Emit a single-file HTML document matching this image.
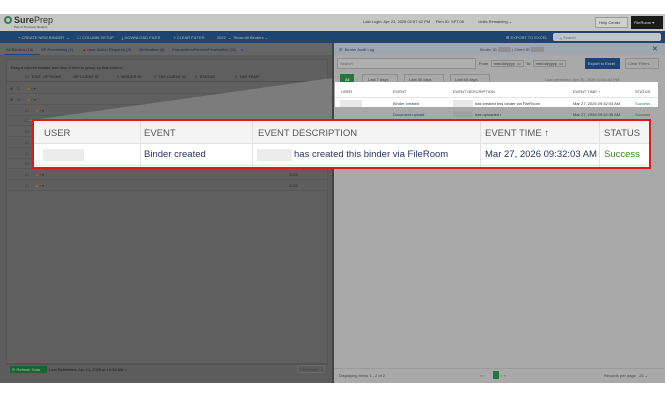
<!DOCTYPE html>
<html><head><meta charset="utf-8"><style>
*{margin:0;padding:0;box-sizing:border-box}
body{width:665px;height:400px;background:#fff;position:relative;overflow:hidden;font-family:"Liberation Sans",sans-serif}
.a{position:absolute}
.t{position:absolute;font-size:4px;color:#333;white-space:nowrap}
.c{font-size:9.5px!important}
</style></head><body>
<div class="a" style="left:0;top:14px;width:665px;height:17px;background:#c6c6c6"></div>
<div class="a" style="left:4px;top:16px;width:8px;height:8px;border-radius:50%;border:2px solid #3b7a4a"></div>
<div class="t" style="left:14px;top:15px;font-size:9px;font-weight:bold;color:#333">Sure<span style="font-weight:normal">Prep</span></div>
<div class="t" style="left:14px;top:25px;font-size:3px">Part of Thomson Reuters</div>
<div class="t" style="left:363px;top:19px">Last Login: Apr 23, 2026 02:57:42 PM &nbsp;&nbsp;&nbsp; Firm ID: SPT.05 &nbsp;&nbsp;&nbsp;&nbsp;&nbsp;&nbsp;&nbsp;&nbsp;&nbsp;&nbsp;&nbsp; Units Remaining ⌄</div>
<div class="a" style="left:595px;top:17px;width:33px;height:11px;border:1px solid #999;background:#d0d0d0"></div>
<div class="t" style="left:599px;top:20px">Help Center</div>
<div class="a" style="left:631px;top:16px;width:32px;height:13px;background:#1a1a1a"></div>
<div class="t" style="left:634px;top:20px;color:#ddd">FileRoom ▾</div>
<div class="a" style="left:0;top:31px;width:665px;height:12px;background:#1f4470"></div>
<div class="t" style="left:18px;top:35px;color:#b0bccc">+ CREATE NEW BINDER &nbsp;⌄ &nbsp;&nbsp;&nbsp;&nbsp;&nbsp; ☐ COLUMN SETUP &nbsp;&nbsp;&nbsp;&nbsp;&nbsp; ⤓ DOWNLOAD FILES &nbsp;&nbsp;&nbsp;&nbsp;&nbsp;&nbsp;&nbsp;&nbsp;&nbsp;&nbsp; ▿ CLEAR FILTER &nbsp;&nbsp;&nbsp;&nbsp;&nbsp;&nbsp;&nbsp;&nbsp;&nbsp; 2022 &nbsp;⌄ &nbsp;Show All Binders ⌄</div>
<div class="t" style="left:506px;top:35px;color:#b0bccc">⊞ EXPORT TO EXCEL</div>
<div class="a" style="left:553px;top:33px;width:108px;height:8px;background:#c0c4ca;border-radius:2px"></div>
<div class="t" style="left:557px;top:35px;color:#667">🔍 Search</div>
<div class="a" style="left:0;top:43px;width:332px;height:340px;background:#5c5c5c"></div>
<div class="a" style="left:0;top:43px;width:332px;height:12px;background:#666"></div>
<div class="a" style="left:4px;top:54px;width:36px;height:1px;background:#1f4470"></div>
<div class="t" style="left:6px;top:47px;color:#1f2840">All Binders (18) &nbsp;&nbsp;&nbsp;&nbsp;&nbsp; SP Processing (1) &nbsp;&nbsp;&nbsp;&nbsp;&nbsp;&nbsp; <span style="color:#8b1a1a">▲</span> User Action Required (8) &nbsp;&nbsp;&nbsp;&nbsp;&nbsp; Verification (8) &nbsp;&nbsp;&nbsp;&nbsp;&nbsp; Preparation/Review/Finalization (11) &nbsp;&nbsp; <span style="color:#1f4470">●</span></div>
<div class="a" style="left:6px;top:59px;width:322px;height:305px;background:#5f5f5f;border:1px solid #555"></div>
<div class="t" style="left:11px;top:65px;color:#1a1a1a">Drag a column header and drop it here to group by that column</div>
<div class="t" style="left:25px;top:74px;color:#1a1a1a">☐ &nbsp; EDIT &nbsp;OPTIONS &nbsp;&nbsp;&nbsp;&nbsp;&nbsp;&nbsp;&nbsp;&nbsp;&nbsp; SP CLIENT ID &nbsp;&nbsp;&nbsp;&nbsp;&nbsp;&nbsp;&nbsp;&nbsp;&nbsp;&nbsp;&nbsp;&nbsp;&nbsp;&nbsp; ≡ &nbsp;BINDER ID &nbsp;&nbsp;&nbsp;&nbsp;&nbsp;&nbsp;&nbsp;&nbsp;&nbsp; ≡ &nbsp;TAX CLIENT ID &nbsp;&nbsp;&nbsp;&nbsp;&nbsp;&nbsp; ≡ &nbsp;STATUS &nbsp;&nbsp;&nbsp;&nbsp;&nbsp;&nbsp;&nbsp;&nbsp;&nbsp;&nbsp;&nbsp;&nbsp;&nbsp;&nbsp;&nbsp;&nbsp; ≡ &nbsp;TAX YEAR</div>
<div class="a" style="left:6px;top:81px;width:322px;height:1px;background:#505050"></div>
<div id="rows"></div>
<div class="a" style="left:0;top:75px;width:333px;height:46px;background:#7c7c7c;clip-path:polygon(332px 3px,332px 46px,25px 46px)"></div>
<div class="a" style="left:6px;top:364px;width:322px;height:1px;background:#525252"></div>
<div class="a" style="left:10px;top:366px;width:37px;height:7px;background:#1a6230"></div>
<div class="t" style="left:12px;top:367px;color:#9c9">⟳ Refresh Data</div>
<div class="t" style="left:49px;top:367px;color:#1a1a1a">Last Refreshed: Apr 24, 2026 at 10:34 AM <span style="color:#1f4470">●</span></div>
<div class="a" style="left:297px;top:365px;width:28px;height:8px;border:1px solid #6a6a6a"></div>
<div class="t" style="left:300px;top:367px;color:#444">‹ Previous</div>
<div class="a" style="left:332px;top:43px;width:2px;height:340px;background:#444"></div>
<div class="a" style="left:334px;top:43px;width:331px;height:340px;background:#a9a9a9"></div>
<div class="a" style="left:334px;top:43px;width:331px;height:12px;background:#a0a6af"></div>
<div class="t" style="left:339px;top:47px;color:#2a3a5a">☰ &nbsp;Binder Audit Log</div>
<div class="t" style="left:480px;top:47px;color:#444">Binder ID <span style="background:#909090;color:#909090">______</span> | Client ID <span style="background:#909090;color:#909090">______</span></div>
<div class="t" style="left:652px;top:45px;font-size:7px;color:#2a3a5a">✕</div>
<div class="a" style="left:337px;top:58px;width:139px;height:11px;border:1px solid #8e8e8e;background:#afafaf"></div>
<div class="t" style="left:340px;top:61px;color:#666">Search</div>
<div class="t" style="left:479px;top:61px;color:#333">From &nbsp;<span style="border:1px solid #8e8e8e;padding:0 2px">mm/dd/yyyy &nbsp;▭</span> &nbsp;To &nbsp;<span style="border:1px solid #8e8e8e;padding:0 2px">mm/dd/yyyy &nbsp;▭</span></div>
<div class="a" style="left:585px;top:58px;width:35px;height:11px;background:#1a4478"></div>
<div class="t" style="left:588px;top:61px;color:#ccd">Export to Excel</div>
<div class="a" style="left:625px;top:58px;width:34px;height:11px;border:1px solid #8e8e8e"></div>
<div class="t" style="left:628px;top:61px;color:#555">Clear Filters</div>
<div class="a" style="left:340px;top:74px;width:14px;height:10px;background:#22783e"></div>
<div class="t" style="left:345px;top:77px;color:#cfc">All</div>
<div class="a" style="left:362px;top:74px;width:36px;height:10px;border:1px solid #8e8e8e"></div>
<div class="t" style="left:368px;top:77px;color:#444">Last 7 days</div>
<div class="a" style="left:404px;top:74px;width:40px;height:10px;border:1px solid #8e8e8e"></div>
<div class="t" style="left:409px;top:77px;color:#444">Last 30 days</div>
<div class="a" style="left:450px;top:74px;width:40px;height:10px;border:1px solid #8e8e8e"></div>
<div class="t" style="left:455px;top:77px;color:#444">Last 60 days</div>
<div class="t" style="left:545px;top:77px;color:#666">Last refreshed: Apr 20, 2026 01:54:52 PM</div>
<div class="a" style="left:335px;top:82px;width:323px;height:25px;background:#fff"></div>
<div class="a" style="left:335px;top:97px;width:323px;height:1px;background:#e4e4e4"></div>
<div class="t" style="left:341px;top:89px;color:#444">USER</div>
<div class="t" style="left:393px;top:89px;color:#444">EVENT</div>
<div class="t" style="left:453px;top:89px;color:#444">EVENT DESCRIPTION</div>
<div class="t" style="left:573px;top:89px;color:#444">EVENT TIME ↑</div>
<div class="t" style="left:635px;top:89px;color:#444">STATUS</div>
<div class="a" style="left:340px;top:100px;width:22px;height:7px;background:#e8e8e8"></div>
<div class="t" style="left:393px;top:101px;color:#2a3a6a">Binder created</div>
<div class="a" style="left:453px;top:100px;width:20px;height:7px;background:#e8e8e8"></div>
<div class="t" style="left:475px;top:101px;color:#333">has created this binder via FileRoom</div>
<div class="t" style="left:573px;top:101px;color:#333">Mar 27, 2026 09:32:03 AM</div>
<div class="t" style="left:635px;top:101px;color:#2a8a3a">Success</div>
<div class="t" style="left:393px;top:112px;color:#2a3a5a">Document upload</div>
<div class="a" style="left:453px;top:111px;width:20px;height:6px;background:#a0a0a0"></div>
<div class="t" style="left:475px;top:112px;color:#333">has uploaded r</div>
<div class="t" style="left:573px;top:112px;color:#333">Mar 27, 2026 09:32:36 AM</div>
<div class="t" style="left:635px;top:112px;color:#2a6a3a">Success</div>
<div class="a" style="left:334px;top:368px;width:331px;height:1px;background:#9a9a9a"></div>
<div class="t" style="left:339px;top:373px;color:#444">Displaying items 1 - 2 of 2</div>
<div class="t" style="left:480px;top:373px;color:#555">« ‹</div>
<div class="a" style="left:493px;top:371px;width:6px;height:8px;background:#22783e"></div>
<div class="t" style="left:501px;top:373px;color:#555">› »</div>
<div class="t" style="left:604px;top:373px;color:#444">Records per page &nbsp;&nbsp;25 ⌄</div>
<div class="a" style="left:32px;top:119px;width:619px;height:50px;border:2px solid #d81c1c;background:#fff"></div>
<div class="a" style="left:34px;top:121px;width:615px;height:23px;background:#f4f4f4;border-bottom:1px solid #e2e2e2"></div>
<div class="a" style="left:34px;top:165px;width:615px;height:1px;background:#e8e8e8"></div>
<div class="a" style="left:140px;top:121px;width:1px;height:46px;background:#e2e2e2"></div>
<div class="a" style="left:252px;top:121px;width:1px;height:46px;background:#e2e2e2"></div>
<div class="a" style="left:480px;top:121px;width:1px;height:46px;background:#e2e2e2"></div>
<div class="a" style="left:599px;top:121px;width:1px;height:46px;background:#e2e2e2"></div>
<div class="t c" style="left:44px;top:128px;color:#555">USER</div>
<div class="t c" style="left:144px;top:128px;color:#555">EVENT</div>
<div class="t c" style="left:258px;top:128px;color:#555">EVENT DESCRIPTION</div>
<div class="t c" style="left:485px;top:128px;color:#555">EVENT TIME ↑</div>
<div class="t c" style="left:604px;top:128px;color:#555">STATUS</div>
<div class="a" style="left:43px;top:149px;width:41px;height:12px;background:#ececec"></div>
<div class="t c" style="left:144px;top:149px;color:#25355e">Binder created</div>
<div class="a" style="left:257px;top:149px;width:35px;height:12px;background:#ececec"></div>
<div class="t c" style="left:294px;top:149px;color:#25355e">has created this binder via FileRoom</div>
<div class="t c" style="left:485px;top:149px;color:#25355e">Mar 27, 2026 09:32:03 AM</div>
<div class="t c" style="left:604px;top:149px;color:#3a8a2a">Success</div>
<script>
var r=document.getElementById('rows'),h='';
var ys=[84,95,106,116,127,138,149,159,170,181];
ys.forEach(function(y,i){
h+='<div class="a" style="left:6px;top:'+(y+9)+'px;width:322px;height:1px;background:#575757"></div>';
h+='<div class="t" style="left:'+(i<2?10:25)+'px;top:'+(y+2)+'px;color:#2a2a2a">'+(i<2?'⊕ &nbsp;&nbsp;':'')+'☐ &nbsp;&nbsp;<span style="color:#2a6a3a">⁄</span> &nbsp;&nbsp;<span style="color:#907018">■</span> <span style="color:#7a1a1a">▪</span> ▾</div>';
if(i>=2&&i<6)h+='<div class="t" style="left:238px;top:'+(y+2)+'px;color:#2a2a2a">in Verification</div>';
h+='<div class="t" style="left:289px;top:'+(y+2)+'px;color:#2a2a2a">2022</div>';
});
r.innerHTML=h;
</script>
</body></html>
